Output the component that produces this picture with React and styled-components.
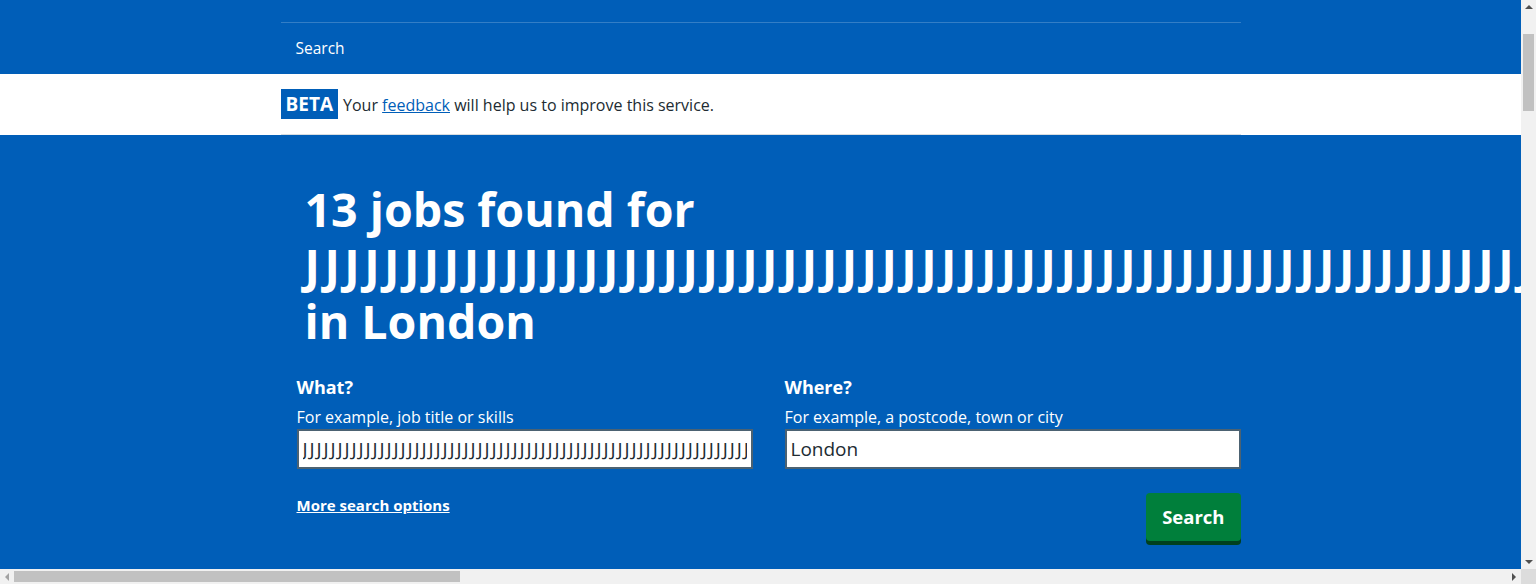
import React from 'react'
import styled, { createGlobalStyle, css } from 'styled-components'

const GlobalStyle = createGlobalStyle`
  html, body {
    margin: 0;
    overflow: hidden;
  }
  body {
    font-family: "Open Sans", "Noto Sans", sans-serif;
    color: #212b32;
    background: #ffffff;
  }
`

const jobQuery = 'J'.repeat(255)

function App() {
  return (
    <Frame>
      <GlobalStyle />
      <Page>
        <Header>
          <Container>
            <Nav>
              <NavLink href="#">Search</NavLink>
            </Nav>
          </Container>
        </Header>
        <PhaseBanner>
          <Container>
            <PhaseRow>
              <Tag>BETA</Tag>
              <PhaseText>
                Your <TextLink href="#">feedback</TextLink> will help us to improve this service.
              </PhaseText>
            </PhaseRow>
          </Container>
        </PhaseBanner>
        <Hero>
          <Container>
            <HeroInner>
              <Heading>13 jobs found for <Query>{jobQuery}</Query> in London</Heading>
              <SearchForm onSubmit={(e) => e.preventDefault()}>
                <Field>
                  <Label htmlFor="keywords">What?</Label>
                  <Hint>For example, job title or skills</Hint>
                  <Input id="keywords" defaultValue={jobQuery} $spread />
                </Field>
                <Field>
                  <Label htmlFor="location">Where?</Label>
                  <Hint>For example, a postcode, town or city</Hint>
                  <Input id="location" defaultValue="London" />
                </Field>
                <Actions>
                  <MoreLink href="#">More search options</MoreLink>
                  <Button type="submit">Search</Button>
                </Actions>
              </SearchForm>
            </HeroInner>
          </Container>
        </Hero>
      </Page>
      <VScroll>
        <Arrow $dir="up" />
        <VThumb />
        <Arrow $dir="down" />
      </VScroll>
      <HScroll>
        <Arrow $dir="left" />
        <HThumb />
        <Arrow $dir="right" />
      </HScroll>
      <Corner />
    </Frame>
  )
}

export default App

const Frame = styled.div`
  display: grid;
  grid-template-columns: 1fr 15px;
  grid-template-rows: 569px 15px;
  width: 100vw;
  height: 584px;
`

const Page = styled.div`
  overflow: hidden;
  min-width: 0;
`

const Container = styled.div`
  width: 960px;
  margin: 0 auto;
`

const Header = styled.header`
  background: #005eb8;
  padding-top: 22px;
`

const Nav = styled.nav`
  display: flex;
  border-top: 1px solid rgba(255, 255, 255, 0.2);
`

const NavLink = styled.a`
  color: #ffffff;
  font-size: 15.5px;
  line-height: 24px;
  padding: 13px 15px 14px;
  text-decoration: none;
`

const PhaseBanner = styled.div`
  background: #ffffff;
`

const PhaseRow = styled.div`
  display: flex;
  align-items: center;
  gap: 5px;
  padding: 15px 0;
  border-bottom: 1px solid #d8dde0;
`

const Tag = styled.strong`
  background: #005eb8;
  color: #ffffff;
  font-size: 19px;
  line-height: 30px;
  padding: 0 5px;
`

const PhaseText = styled.p`
  margin: 0;
  padding-top: 2px;
  font-size: 16px;
  line-height: 24px;
`

const TextLink = styled.a`
  color: #005eb8;
  text-decoration: underline;
`

const Hero = styled.section`
  background: #005eb8;
  color: #ffffff;
  padding: 46px 0 48px;
`

const HeroInner = styled.div`
  padding-left: 16px;
`

const Heading = styled.h1`
  margin: 0 0 26px 8px;
  font-size: 46.5px;
  line-height: 56px;
  font-weight: 700;
`

const Query = styled.span`
  letter-spacing: 4.5px;
`

const SearchForm = styled.form`
  display: grid;
  grid-template-columns: 456px 456px;
  column-gap: 32px;
`

const Field = styled.div`
  display: flex;
  flex-direction: column;
`

const Label = styled.label`
  font-size: 18px;
  line-height: 25px;
  font-weight: 700;
  margin-bottom: 5px;
`

const Hint = styled.span`
  font-size: 16px;
  line-height: 24px;
`

const Input = styled.input`
  box-sizing: border-box;
  height: 40px;
  width: 100%;
  border: 2px solid #4c6272;
  padding: 4px;
  font-family: inherit;
  font-size: 19px;
  color: #212b32;
  background: #ffffff;
  outline: none;
  letter-spacing: ${({ $spread }) => ($spread ? '1.9px' : 'normal')};
`

const Actions = styled.div`
  grid-column: 1 / -1;
  display: flex;
  justify-content: space-between;
  align-items: flex-start;
  margin-top: 24px;
`

const MoreLink = styled.a`
  color: #ffffff;
  font-size: 15px;
  line-height: 24px;
  font-weight: 700;
  text-decoration: underline;
`

const Button = styled.button`
  background: #007f3b;
  color: #ffffff;
  border: 0;
  border-radius: 4px;
  box-shadow: 0 4px 0 #00401e;
  padding: 12px 16px;
  font-family: inherit;
  font-size: 18.5px;
  line-height: 24px;
  font-weight: 700;
  cursor: pointer;
`

/* browser scrollbars, drawn since the page is clipped */
const VScroll = styled.div`
  display: flex;
  flex-direction: column;
  align-items: center;
  background: #f1f1f1;
`

const HScroll = styled.div`
  display: flex;
  align-items: center;
  background: #f1f1f1;
`

const VThumb = styled.div`
  width: 11px;
  height: 77px;
  margin-top: 20px;
  margin-bottom: auto;
  background: #c1c1c1;
`

const HThumb = styled.div`
  width: 446px;
  height: 11px;
  margin-right: auto;
  background: #c1c1c1;
`

const arrowShapes = {
  up: css`
    border-left: 4px solid transparent;
    border-right: 4px solid transparent;
    border-bottom: 4px solid #505050;
  `,
  down: css`
    border-left: 4px solid transparent;
    border-right: 4px solid transparent;
    border-top: 4px solid #505050;
  `,
  left: css`
    border-top: 4px solid transparent;
    border-bottom: 4px solid transparent;
    border-right: 4px solid #a3a3a3;
  `,
  right: css`
    border-top: 4px solid transparent;
    border-bottom: 4px solid transparent;
    border-left: 4px solid #505050;
  `,
}

const Arrow = styled.span`
  flex: none;
  width: 0;
  height: 0;
  margin: ${({ $dir }) => ($dir === 'up' || $dir === 'down' ? '5px 0' : '0 5px')};
  ${({ $dir }) => arrowShapes[$dir]}
`

const Corner = styled.div`
  background: #dcdcdc;
`
